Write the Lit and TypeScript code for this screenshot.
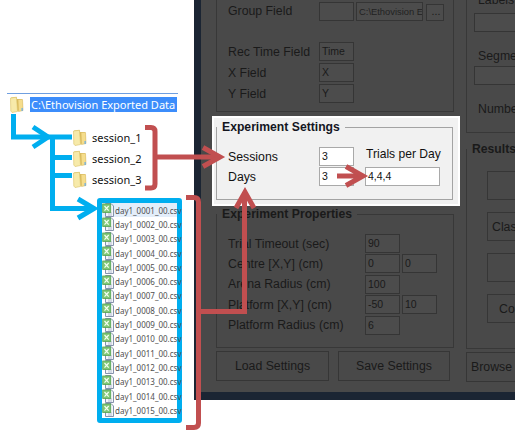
import { LitElement, html, css, svg } from "lit";
import { customElement } from "lit/decorators.js";

const folder = html`<svg class="folder" viewBox="0 0 14 17" width="14" height="17">
  <path d="M1 1.5 L6.5 1 L7 3 L12 3.5 L12.5 14 L7 15 Z" fill="#d8b95a"/>
  <path d="M.5 2 L6.5 1.2 L7.5 15.5 L2 16.5 L.8 15 Z" fill="#f7eaaa" stroke="#e0c874" stroke-width=".7"/>
  <path d="M8 3.5 L12.5 3.5 L13 14.5 L8.5 15.5 Z" fill="#f5dd8c" stroke="#d8b95a" stroke-width=".6"/>
  <rect x="11.5" y="12" width="1.3" height="3" fill="#6fb0e4"/>
</svg>`;

const sheet = html`<svg class="sheet" viewBox="0 0 12 14" width="12" height="14">
  <path d="M3.5 .5 H9 L11.5 3 V13.5 H3.5 Z" fill="#f4f6fa" stroke="#8592ac" stroke-width="1"/>
  <path d="M6 10 H10 M6 12 H10" stroke="#a5b0c6" stroke-width=".8"/>
  <rect x=".7" y="1" width="8" height="8.5" fill="#82c877" stroke="#56a352" stroke-width=".8"/>
  <path d="M2.5 3 L6.7 7.7 M6.7 3 L2.5 7.7" stroke="#f4fff2" stroke-width="1.2"/>
</svg>`;

const files = Array.from({ length: 15 }, (_, i) => `day1_${String(i + 1).padStart(4, "0")}_00.csv`);

const overlay = svg`
  <g fill="none" stroke-linejoin="miter" stroke-linecap="butt" stroke-width="5">
    <g stroke="#00aeef">
      <path d="M13.5 114 V137 H72"/>
      <path d="M33 127 L48 137 L33 147"/>
      <path d="M52.5 137 V208.5 H95"/>
      <path d="M52.5 157.5 H72 M52.5 175.5 H72"/>
      <path d="M78 199 L94 208.5 L78 218"/>
    </g>
    <g stroke="#c14f50">
      <path d="M145 127.5 H151 Q155 127.5 155 131.5 V184 Q155 188 151 188 H145"/>
      <path d="M155 157 H220"/>
      <path d="M203 147.5 L220 157 L203 166.5"/>
      <path d="M186 197.5 H194 Q198.5 197.5 198.5 202 V423 Q198.5 427.5 194 427.5 H186"/>
      <path d="M198.5 311.5 H244.5 V192"/>
      <path d="M236 208 L245 192 L254 208"/>
      <path d="M337 176 H362"/>
      <path d="M346 166.5 L363 176 L346 185.5"/>
    </g>
  </g>`;

@customElement("app-root")
export class AppRoot extends LitElement {
  static styles = css`
    :host { display: block; width: 515px; height: 441px; position: relative; overflow: hidden; background: #fff; font-family: "Liberation Sans", Arial, sans-serif; }
    .page { display: flex; width: 515px; height: 441px; }
    .explorer { width: 194px; flex: none; padding-top: 93px; box-sizing: border-box; font-family: "Noto Sans", sans-serif; }
    .line { height: 1px; width: 171px; margin-left: 7px; background: #6f9fe0; }
    .root { display: flex; align-items: center; height: 17px; margin-top: 2px; padding-left: 10px; gap: 6px; }
    .root svg, .session svg, .file svg { flex: none; }
    .root span { background: #3c8dfb; color: #fff; font-size: 11px; line-height: 15px; width: 147px; box-sizing: border-box; padding-left: 1px; white-space: nowrap; }
    .sessions { display: flex; flex-direction: column; gap: 4px; margin-top: 16px; padding-left: 73px; }
    .session { display: flex; align-items: center; height: 17px; gap: 5px; font-size: 11px; color: #111; }
    .filebox { margin: 10px 0 0 97px; width: 85px; height: 225px; box-sizing: border-box; border: 5px solid #00aeef; border-radius: 3px; background: #fff; }
    .file { display: flex; align-items: center; height: 14.3px; gap: 1px; font-size: 8px; color: #4f4f4f; white-space: nowrap; }
    .file.sel { background: #e3eefa; }
    .window { flex: none; width: 321px; height: 400px; box-sizing: border-box; background: #494949; border-left: 7px solid #1b2533; border-bottom: 8px solid #1b2533; display: flex; padding-left: 15px; gap: 12px; overflow: hidden; color: #1a1a1a; font-size: 12.3px; }
    .col { width: 238px; flex: none; display: flex; flex-direction: column; }
    .rcol { width: 60px; flex: none; display: flex; flex-direction: column; }
    fieldset { margin: 0; padding: 0; border: 1px solid #383838; box-sizing: border-box; min-width: 0; }
    legend { font-weight: 700; font-size: 12.2px; line-height: 16px; padding: 0 5px; margin-left: -11px; }
    .input { box-sizing: border-box; height: 19px; border: 1px solid #353535; background: #4c4c4c; font-size: 10.5px; line-height: 17px; padding-left: 2px; overflow: hidden; white-space: nowrap; }
    .form { display: grid; align-items: center; }
    .top { height: 112px; border: 1px solid #383838; border-top: 0; box-sizing: border-box; padding: 1px 0 0 11px; }
    .top .form { grid-template-columns: 91px 35px; grid-auto-rows: 19px; row-gap: 2px; }
    .group-row { display: grid; grid-template-columns: 91px 35px 68px 18px; align-items: center; height: 19px; margin-bottom: 22px; }
    .path { margin: 1px 0 0 2px; width: 67px; font-size: 9.4px; color: #222; }
    .dots { margin: 2px 0 0 4px; width: 18px; height: 17px; text-align: center; line-height: 13px; }
    .hl { margin: 4px 0 0 -4px; width: 248px; height: 90px; box-sizing: border-box; background: #f1f1f1; border: 2px solid #fff; padding: 1px 5px 4px 2px; color: #111; }
    .hl fieldset { height: 81px; border: 1px solid #a3a3a3; padding: 12px 0 0 11px; }
    .hl legend { color: #14161f; }
    .hl .form { grid-template-columns: 91px 35px 11px 75px; grid-template-rows: 19px 19px; row-gap: 1px; }
    .hl .input { background: #fff; border-color: #a9a9a9; }
    .trials { align-self: start; padding-left: 1px; white-space: nowrap; line-height: 15px; font-size: 12.1px; }
    .props { height: 142px; padding: 12px 0 0 11px; }
    .props .form { grid-template-columns: 137px 35px 2px 35px; grid-auto-rows: 19px; row-gap: 1.4px; }
    .btns { display: flex; gap: 9px; margin-top: 3px; }
    .btn { box-sizing: border-box; border: 1px solid #363636; height: 30px; display: flex; align-items: center; justify-content: center; font-size: 12.3px; white-space: nowrap; }
    .btn.a { width: 113px; }
    .btn.b { width: 112px; }
    .rtop { height: 133px; border-left: 1px solid #383838; border-bottom: 1px solid #383838; box-sizing: border-box; padding: 0 0 0 7px; }
    .rtop .lab { padding-left: 4px; height: 13px; line-height: 0; white-space: nowrap; }
    .rtop .input { width: 60px; height: 19px; }
    .rtop .seg { margin-top: 14px; height: 20px; line-height: 20px; padding-left: 4px; white-space: nowrap; }
    .rtop .num { margin-top: 16px; line-height: 16px; padding-left: 4px; }
    .results { height: 208px; margin-top: 8px; padding: 14px 0 0 20px; width: 70px; border-right: 0; display: flex; flex-direction: column; gap: 12px; }
    .results legend { margin-left: -20px; padding: 0 0 0 5px; white-space: nowrap; }
    .results .btn { width: 70px; height: 29px; justify-content: flex-start; padding-left: 4px; }
    .results .c4 { padding-left: 11px; }
    .rbtn { margin-top: 3px; width: 70px; justify-content: flex-start !important; padding-left: 4px; }
    .overlay { position: absolute; left: 0; top: 0; pointer-events: none; }
  `;

  render() {
    return html`
      <div class="page">
        <div class="explorer">
          <div class="line"></div>
          <div class="root">${folder}<span>C:\\Ethovision Exported Data</span></div>
          <div class="sessions">
            ${["session_1", "session_2", "session_3"].map((s) => html`<div class="session">${folder}<span>${s}</span></div>`)}
          </div>
          <div class="filebox">
            ${files.map((f, i) => html`<div class="file ${i === 0 ? "sel" : ""}">${sheet}<span>${f}</span></div>`)}
          </div>
        </div>
        <div class="window">
          <div class="col">
            <div class="top">
              <div class="group-row">
                <span>Group Field</span>
                <div class="input"></div>
                <div class="input path">C:\\Ethovision E</div>
                <div class="input dots">...</div>
              </div>
              <div class="form">
                <span>Rec Time Field</span><div class="input">Time</div>
                <span>X Field</span><div class="input">X</div>
                <span>Y Field</span><div class="input">Y</div>
              </div>
            </div>
            <div class="hl">
              <fieldset>
                <legend>Experiment Settings</legend>
                <div class="form">
                  <span>Sessions</span><div class="input">3</div><i></i><span class="trials">Trials per Day</span>
                  <span>Days</span><div class="input">3</div><i></i><div class="input">4,4,4</div>
                </div>
              </fieldset>
            </div>
            <fieldset class="props">
              <legend>Experiment Properties</legend>
              <div class="form">
                <span>Trial Timeout (sec)</span><div class="input">90</div><i></i><i></i>
                <span>Centre [X,Y] (cm)</span><div class="input">0</div><i></i><div class="input">0</div>
                <span>Arena Radius (cm)</span><div class="input">100</div><i></i><i></i>
                <span>Platform [X,Y] (cm)</span><div class="input">-50</div><i></i><div class="input">10</div>
                <span>Platform Radius (cm)</span><div class="input">6</div><i></i><i></i>
              </div>
            </fieldset>
            <div class="btns">
              <div class="btn a">Load Settings</div>
              <div class="btn b">Save Settings</div>
            </div>
          </div>
          <div class="rcol">
            <div class="rtop">
              <div class="lab">Labels</div>
              <div class="input"></div>
              <div class="seg">Segment</div>
              <div class="input"></div>
              <div class="num">Number</div>
            </div>
            <fieldset class="results">
              <legend>Results</legend>
              <div class="btn"></div>
              <div class="btn">Classify</div>
              <div class="btn"></div>
              <div class="btn c4">Convert</div>
            </fieldset>
            <div class="btn rbtn">Browse</div>
          </div>
        </div>
      </div>
      <svg class="overlay" width="515" height="441" viewBox="0 0 515 441">${overlay}</svg>
    `;
  }
}
